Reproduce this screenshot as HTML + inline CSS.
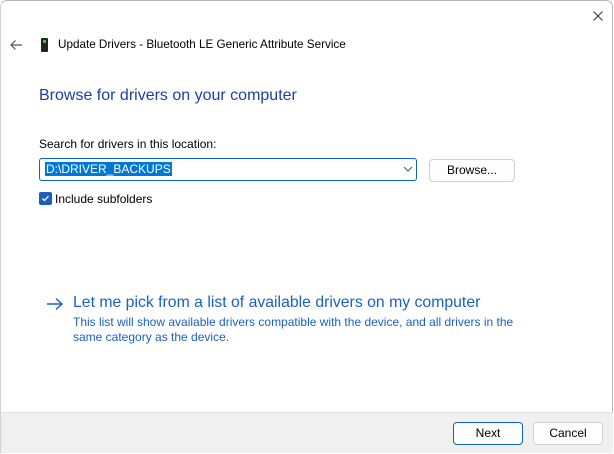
<!DOCTYPE html>
<html><head><meta charset="utf-8"><style>
*{margin:0;padding:0;box-sizing:border-box}
body{width:614px;height:454px;background:#fff;font-family:"Liberation Sans",sans-serif;font-size:12px;color:#000;position:relative;overflow:hidden}
.win{position:absolute;left:0;top:0;width:613px;height:453px;border:1px solid #b5b5b5;border-left:1px solid #d0d0d0;border-radius:7px 7px 0 0;background:#fff}
.a{position:absolute;white-space:nowrap}
.footer{position:absolute;left:1px;right:1px;top:412px;bottom:1px;background:#f0f0f0;border-top:1px solid #dfdfdf}
.btn{position:absolute;height:23px;border:1px solid #d0d0d0;border-radius:4px;background:#fdfdfd;text-align:center;line-height:21px;font-size:12px}
</style></head><body>
<div class="win"></div>
<svg class="a" style="left:593px;top:11px" width="10" height="10"><path d="M0.5 0.5l9 9M9.5 0.5l-9 9" stroke="#333" stroke-width="1"/></svg>
<svg class="a" style="left:9px;top:39px" width="14" height="12"><path d="M13 6H2M6.5 1.5L2 6l4.5 4.5" fill="none" stroke="#555" stroke-width="1.2"/></svg>
<div class="a" style="left:41px;top:38px;width:7px;height:14px;background:#222;border-radius:1px"></div>
<div class="a" style="left:43px;top:40px;width:3px;height:3px;background:#3c3"></div>
<div class="a" style="left:58px;top:38px;font-size:11.7px">Update Drivers - Bluetooth LE Generic Attribute Service</div>
<div class="a" style="left:39px;top:87px;font-size:16px;color:#1c3fa8">Browse for drivers on your computer</div>
<div class="a" style="left:39px;top:137px">Search for drivers in this location:</div>
<div class="a" style="left:39px;top:158px;width:378px;height:23px;border:1px solid #0a64c8;border-radius:3px;background:#fff"></div>
<div class="a" style="left:45px;top:162px;background:#0078d7;color:#fff;padding:0 1px;line-height:14px">D:\DRIVER_BACKUPS</div>
<svg class="a" style="left:403px;top:166px" width="10" height="6"><path d="M1 1l4 4 4-4" fill="none" stroke="#555"/></svg>
<div class="btn" style="left:429px;top:159px;width:86px">Browse...</div>
<div class="a" style="left:39px;top:192px;width:13px;height:13px;background:#1c5fb8;border-radius:2px"></div>
<svg class="a" style="left:40px;top:193px" width="11" height="11"><path d="M2.5 5.5l2 2 4-4.5" fill="none" stroke="#fff" stroke-width="1.3"/></svg>
<div class="a" style="left:55px;top:192px">Include subfolders</div>
<svg class="a" style="left:46px;top:297px" width="18" height="14"><path d="M1 7h15M10 1.5L16 7l-6 5.5" fill="none" stroke="#1a5fc8" stroke-width="1.4"/></svg>
<div class="a" style="left:73px;top:294px;font-size:15.8px;color:#1a5fc8">Let me pick from a list of available drivers on my computer</div>
<div class="a" style="left:73px;top:315px;color:#1a5fc8;line-height:15px;white-space:normal;width:445px">This list will show available drivers compatible with the device, and all drivers in the same category as the device.</div>
<div class="footer"></div>
<div class="btn" style="left:453px;top:422px;width:70px;border:1px solid #0a64c8">Next</div>
<div class="btn" style="left:533px;top:422px;width:70px">Cancel</div>
</body></html>
